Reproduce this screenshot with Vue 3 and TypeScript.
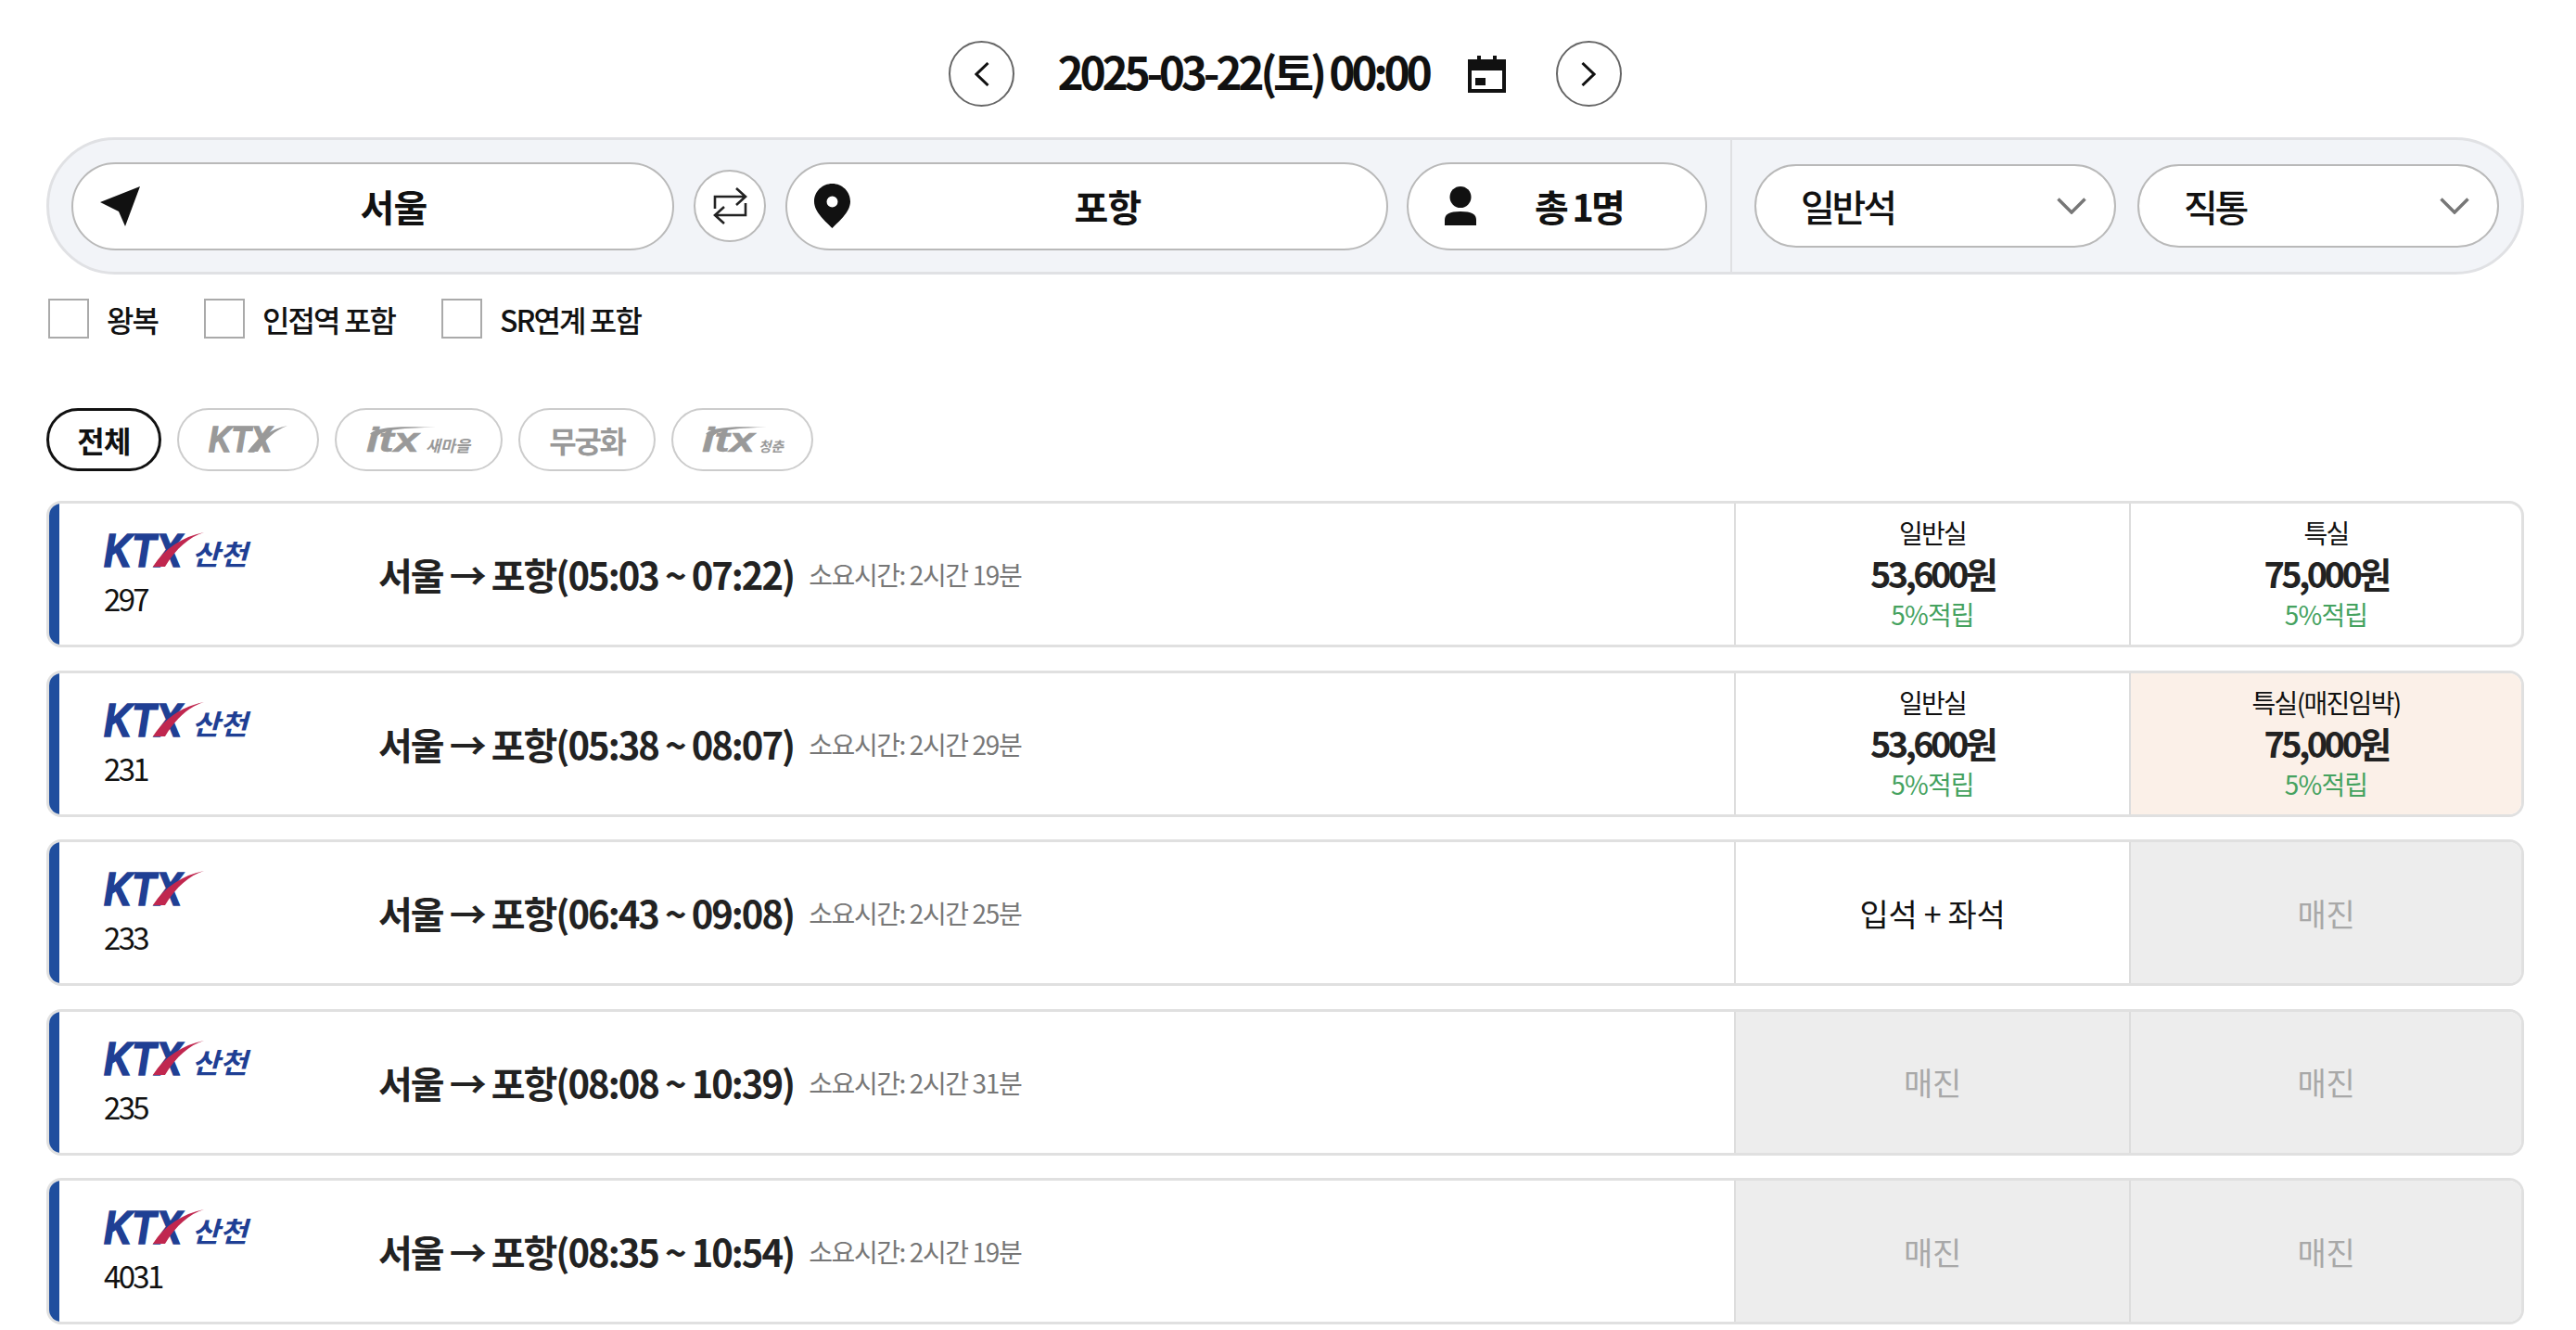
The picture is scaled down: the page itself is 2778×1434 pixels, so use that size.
<script setup lang="ts">
interface Seat {
  kind: 'price' | 'text' | 'soldout';
  label?: string;
  price?: string;
  urgent?: boolean;
}

interface Train {
  no: string;
  sancheon: boolean;
  time: string;
  duration: string;
  seats: Seat[];
}

const normal: Seat = { kind: 'price', label: '일반실', price: '53,600원' };
const first: Seat = { kind: 'price', label: '특실', price: '75,000원' };
const soldout: Seat = { kind: 'soldout', label: '매진' };

const trains: Train[] = [
  { no: '297', sancheon: true, time: '05:03 ~ 07:22', duration: '2시간 19분', seats: [normal, first] },
  {
    no: '231',
    sancheon: true,
    time: '05:38 ~ 08:07',
    duration: '2시간 29분',
    seats: [normal, { kind: 'price', label: '특실(매진임박)', price: '75,000원', urgent: true }],
  },
  {
    no: '233',
    sancheon: false,
    time: '06:43 ~ 09:08',
    duration: '2시간 25분',
    seats: [{ kind: 'text', label: '입석 + 좌석' }, soldout],
  },
  { no: '235', sancheon: true, time: '08:08 ~ 10:39', duration: '2시간 31분', seats: [soldout, soldout] },
  { no: '4031', sancheon: true, time: '08:35 ~ 10:54', duration: '2시간 19분', seats: [soldout, soldout] },
];

const options = ['왕복', '인접역 포함', 'SR연계 포함'];
</script>

<template>
  <div class="page">
    <header class="date-nav">
      <button class="round-btn" type="button" aria-label="이전">
        <svg width="16" height="26" viewBox="0 0 16 26"><path d="M14.5 1 2 13l12.5 12" fill="none" stroke="#111" stroke-width="3" /></svg>
      </button>
      <h1 class="date-text">2025-03-22(토) 00:00</h1>
      <svg class="calendar" width="41" height="40" viewBox="0 0 41 40">
        <path fill="#111" fill-rule="evenodd" d="M10 0h4v4h13V0h4v4h10v36H0V4h10zM4 16v20h33V16z" />
        <rect x="8" y="24" width="11" height="8" fill="#111" />
      </svg>
      <button class="round-btn" type="button" aria-label="다음">
        <svg width="16" height="26" viewBox="0 0 16 26"><path d="M1.5 1 14 13 1.5 25" fill="none" stroke="#111" stroke-width="3" /></svg>
      </button>
    </header>

    <section class="search-bar">
      <div class="search-left">
        <div class="pill station">
          <span class="pill-icon">
            <svg width="43" height="43" viewBox="0 0 43 43"><path d="M43 0 0 17l20 10 7 16z" fill="#111" /></svg>
          </span>
          <span class="pill-text">서울</span>
        </div>
        <button class="swap" type="button" aria-label="출발 도착 변경">
          <svg width="37" height="42" viewBox="0 0 37 42" fill="none" stroke="#222" stroke-width="2.6">
            <path d="M2 24V11h32M25 2l10 9-10 9" />
            <path d="M35 18v13H3M12 22 2 31l10 9" />
          </svg>
        </button>
        <div class="pill station">
          <span class="pill-icon">
            <svg width="39" height="48" viewBox="0 0 39 48">
              <path fill="#111" fill-rule="evenodd" d="M19.500 0C8.700 0 0 8.600 0 19.200 0 31 13 41 19.500 48 26 41 39 31 39 19.200 39 8.600 30.300 0 19.500 0zm0 13.500a6 6 0 1 1 0 12 6 6 0 0 1 0-12z" />
            </svg>
          </span>
          <span class="pill-text">포항</span>
        </div>
        <div class="pill people">
          <svg width="34" height="42" viewBox="0 0 34 42">
            <circle cx="17" cy="11.500" r="11.500" fill="#111" />
            <path d="M0 42V36C0 30 5 27 17 27s17 3 17 9v6z" fill="#111" />
          </svg>
          <span class="pill-text people-text">총 1명</span>
        </div>
      </div>
      <div class="search-right">
        <div class="select">
          <span>일반석</span>
          <svg width="32" height="18" viewBox="0 0 32 18"><path d="M1.500 1.500 16 16 30.500 1.500" fill="none" stroke="#777" stroke-width="3.500" /></svg>
        </div>
        <div class="select">
          <span>직통</span>
          <svg width="32" height="18" viewBox="0 0 32 18"><path d="M1.500 1.500 16 16 30.500 1.500" fill="none" stroke="#777" stroke-width="3.500" /></svg>
        </div>
      </div>
    </section>

    <div class="checks">
      <label v-for="opt in options" :key="opt" class="check">
        <span class="box"></span>
        <span>{{ opt }}</span>
      </label>
    </div>

    <nav class="filters">
      <button class="chip chip-active" type="button">전체</button>
      <button class="chip chip-ktx" type="button">
        <svg width="86" height="30" viewBox="0 0 86 30">
          <text class="mark-latin" x="0" y="28" font-size="39" textLength="68" lengthAdjust="spacingAndGlyphs" fill="#999" stroke="#999">KTX</text>
          <path d="M42 28C52 14 66 4 85 0 72 5 61 14 53 28z" fill="#999" />
        </svg>
      </button>
      <button class="chip chip-itx" type="button">
        <svg width="113" height="30" viewBox="0 0 113 30">
          <text class="mark-latin mark-thin" x="0" y="28" font-size="36" textLength="57" lengthAdjust="spacingAndGlyphs" fill="#999" stroke="#999">itx</text>
          <path d="M4 9C10 2 30 0 75 2 40 2 20 4 12 11z" fill="#999" />
          <text class="mark-han" x="64" y="28" font-size="17" textLength="48" lengthAdjust="spacingAndGlyphs" fill="#999">새마을</text>
        </svg>
      </button>
      <button class="chip chip-mugunghwa" type="button">무궁화</button>
      <button class="chip chip-youth" type="button">
        <svg width="88" height="30" viewBox="0 0 88 30">
          <text class="mark-latin mark-thin" x="0" y="28" font-size="36" textLength="57" lengthAdjust="spacingAndGlyphs" fill="#999" stroke="#999">itx</text>
          <path d="M4 9C10 2 30 0 70 2 40 2 20 4 12 11z" fill="#999" />
          <text class="mark-han" x="61" y="28" font-size="15" textLength="27" lengthAdjust="spacingAndGlyphs" fill="#999">청춘</text>
        </svg>
      </button>
    </nav>

    <ul class="trains">
      <li v-for="t in trains" :key="t.no" class="train">
        <span class="band"></span>
        <div class="info">
          <svg class="logo" width="160" height="37" viewBox="0 0 160 37">
            <text class="mark-latin" transform="translate(0 37) scale(1 1.19)" font-size="42" fill="#1f3f94" stroke="#1f3f94">KTX</text>
            <path d="M53 37C66 17 84 5 108 0 92 5 78 17 66 37z" fill="#c0274f" />
            <text v-if="t.sancheon" class="mark-han" x="95" y="35" font-size="30" textLength="60" lengthAdjust="spacingAndGlyphs" fill="#1f3f94">산천</text>
          </svg>
          <span class="train-no">{{ t.no }}</span>
        </div>
        <div class="route">
          <strong class="route-title">서울 → 포항({{ t.time }})</strong>
          <span class="duration">소요시간: {{ t.duration }}</span>
        </div>
        <div
          v-for="(s, i) in t.seats"
          :key="i"
          class="seat"
          :class="{ 'seat-urgent': s.urgent, 'seat-soldout': s.kind === 'soldout' }"
        >
          <template v-if="s.kind === 'price'">
            <span class="seat-label">{{ s.label }}</span>
            <span class="seat-price">{{ s.price }}</span>
            <span class="seat-point">5%적립</span>
          </template>
          <span v-else class="seat-big">{{ s.label }}</span>
        </div>
      </li>
    </ul>
  </div>
</template>

<style scoped>
.page {
  width: 2778px;
  box-sizing: border-box;
  padding: 44px 56px 0 50px;
  font-family: "Noto Sans CJK KR", "Noto Sans", sans-serif;
  color: #111;
  letter-spacing: -0.05em;
}

button {
  font: inherit;
  letter-spacing: inherit;
  cursor: pointer;
  padding: 0;
  background: #fff;
}

.date-nav {
  display: flex;
  align-items: center;
  justify-content: center;
  height: 71px;
}

.round-btn {
  width: 71px;
  height: 71px;
  border: 2px solid #666;
  border-radius: 50%;
  display: flex;
  align-items: center;
  justify-content: center;
}

.date-text {
  margin: 0 42px 0 46px;
  padding-bottom: 6px;
  font-size: 48px;
  font-weight: 700;
  line-height: 65px;
  letter-spacing: -0.09em;
  white-space: nowrap;
}

.calendar {
  margin-right: 54px;
}

.search-bar {
  margin-top: 33px;
  height: 148px;
  box-sizing: border-box;
  display: flex;
  background: #f2f4f8;
  border: 3px solid #e0e1e4;
  border-radius: 74px;
}

.search-left {
  width: 1815px;
  box-sizing: border-box;
  padding-left: 24px;
  display: flex;
  align-items: center;
  border-right: 2px solid #dfe0e3;
}

.pill {
  height: 95px;
  box-sizing: border-box;
  background: #fff;
  border: 2px solid #b9b9b9;
  border-radius: 48px;
  display: flex;
  align-items: center;
}

.station {
  width: 650px;
  padding: 0 27px 0 29px;
}

.pill-icon {
  width: 43px;
  display: flex;
}

.pill-text {
  flex: 1;
  text-align: center;
  font-size: 40px;
  font-weight: 700;
}

.swap {
  width: 78px;
  height: 78px;
  margin: 0 21px;
  border: 2px solid #b9b9b9;
  border-radius: 50%;
  display: flex;
  align-items: center;
  justify-content: center;
}

.people {
  width: 324px;
  margin-left: 20px;
  padding-left: 39px;
}

.people-text {
  flex: none;
  margin-left: 63px;
  letter-spacing: -0.07em;
}

.search-right {
  flex: 1;
  display: flex;
  align-items: center;
  gap: 23px;
  padding-left: 24px;
}

.select {
  width: 390px;
  height: 90px;
  box-sizing: border-box;
  padding: 0 30px 0 48px;
  background: #fff;
  border: 2px solid #b9b9b9;
  border-radius: 45px;
  display: flex;
  align-items: center;
  justify-content: space-between;
  font-size: 40px;
  font-weight: 500;
  letter-spacing: -0.08em;
}

.checks {
  margin-top: 26px;
  padding-left: 2px;
  display: flex;
  gap: 50px;
}

.check {
  display: flex;
  align-items: center;
  gap: 19px;
  font-size: 32px;
  font-weight: 500;
  letter-spacing: -0.06em;
  height: 43px;
}

.box {
  width: 44px;
  height: 43px;
  box-sizing: border-box;
  background: #fff;
  border: 2px solid #aaa;
}

.filters {
  margin-top: 75px;
  display: flex;
  gap: 17px;
}

.chip {
  height: 68px;
  box-sizing: border-box;
  border: 2px solid #ccc;
  border-radius: 34px;
  display: flex;
  align-items: center;
  justify-content: center;
}

.chip svg {
  overflow: visible;
}

.chip-active {
  width: 124px;
  border: 3px solid #111;
  color: #111;
  font-size: 32px;
  font-weight: 700;
}

.chip-ktx { width: 153px; }
.chip-itx { width: 181px; }
.chip-youth { width: 153px; }

.chip-mugunghwa {
  width: 148px;
  color: #999;
  font-size: 32px;
  font-weight: 700;
  letter-spacing: -0.07em;
}

.mark-latin {
  font-family: "Liberation Sans", Arial, sans-serif;
  font-style: italic;
  font-weight: 700;
  letter-spacing: 0;
  stroke-width: 1.4px;
}

.mark-thin {
  stroke-width: 0.5px;
}

.mark-han {
  font-style: italic;
  font-weight: 700;
  letter-spacing: 0;
}

.trains {
  list-style: none;
  margin: 32px 0 0;
  padding: 0;
  display: flex;
  flex-direction: column;
  gap: 24.5px;
}

.train {
  height: 158px;
  box-sizing: border-box;
  display: flex;
  background: #fff;
  border: 3px solid #e0e0e0;
  border-radius: 16px;
  overflow: hidden;
}

.band {
  width: 11px;
  flex: none;
  background: #1f4e9e;
}

.info {
  width: 344px;
  flex: none;
  box-sizing: border-box;
  padding: 31px 0 0 48px;
  display: flex;
  flex-direction: column;
  align-items: flex-start;
}

.logo {
  overflow: visible;
  display: block;
}

.train-no {
  margin-top: 14px;
  font-size: 33px;
  line-height: 40px;
  letter-spacing: -0.08em;
}

.route {
  flex: 1;
  display: flex;
  align-items: center;
  gap: 16px;
  min-width: 0;
}

.route-title {
  font-size: 40px;
  font-weight: 700;
  color: #222;
  letter-spacing: -0.05em;
  white-space: nowrap;
}

.duration {
  font-size: 28px;
  color: #777;
  letter-spacing: -0.05em;
  white-space: nowrap;
}

.seat {
  width: 426px;
  flex: none;
  box-sizing: border-box;
  border-left: 2px solid #ddd;
  display: flex;
  flex-direction: column;
  align-items: center;
  justify-content: center;
}

.seat:last-child {
  width: 423px;
}

.seat-urgent {
  background: #fbf0e8;
}

.seat-soldout {
  background: #ededed;
  color: #a8a8a8;
}

.seat-label {
  font-size: 28px;
  line-height: 40px;
  letter-spacing: -0.06em;
}

.seat-price {
  font-size: 38px;
  font-weight: 700;
  line-height: 48px;
  letter-spacing: -0.095em;
  color: #222;
}

.seat-point {
  font-size: 28px;
  line-height: 40px;
  margin-bottom: 2px;
  color: #45a25f;
}

.seat-big {
  font-size: 34px;
  letter-spacing: -0.01em;
}
</style>
